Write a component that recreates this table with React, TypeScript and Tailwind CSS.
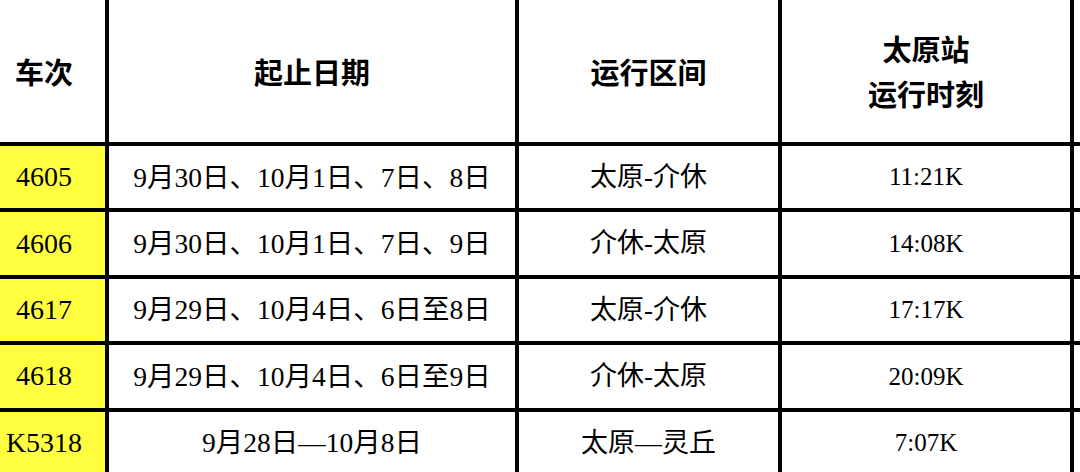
const rows = [
  { no: "4605", dates: "9月30日、10月1日、7日、8日", route: "太原-介休", time: "11:21K" },
  { no: "4606", dates: "9月30日、10月1日、7日、9日", route: "介休-太原", time: "14:08K" },
  { no: "4617", dates: "9月29日、10月4日、6日至8日", route: "太原-介休", time: "17:17K" },
  { no: "4618", dates: "9月29日、10月4日、6日至9日", route: "介休-太原", time: "20:09K" },
  { no: "K5318", dates: "9月28日—10月8日", route: "太原—灵丘", time: "7:07K" },
];

const head =
  "flex items-center justify-center bg-white text-[29px] font-bold text-black leading-[45px] text-center font-['Noto_Sans_CJK_SC',sans-serif]";
const cell = "flex items-center justify-center text-black whitespace-nowrap";

export default function App() {
  return (
    <div className="w-[1080px] h-[472px] overflow-hidden bg-white font-['Liberation_Serif','Noto_Sans_CJK_SC',serif]">
      {/* table is cropped on the left: first column is partly off screen */}
      <div className="-ml-[17px] grid grid-cols-[122px_406px_259px_288px_200px] grid-rows-[142px_repeat(5,62.4px)] gap-[4px] bg-black w-max">
        <div className={head}>车次</div>
        <div className={head}>起止日期</div>
        <div className={head}>运行区间</div>
        <div className={head}>
          太原站
          <br />
          运行时刻
        </div>
        <div className="bg-white" />

        {rows.map((r) => (
          <>
            <div key={r.no + "a"} className={cell + " bg-[#ffff40] text-[28px]"}>{r.no}</div>
            <div key={r.no + "b"} className={cell + " bg-white text-[27.5px]"}>{r.dates}</div>
            <div key={r.no + "c"} className={cell + " bg-white text-[27px]"}>{r.route}</div>
            <div key={r.no + "d"} className={cell + " bg-white text-[25px]"}>{r.time}</div>
            <div key={r.no + "e"} className="bg-white" />
          </>
        ))}
      </div>
    </div>
  );
}
